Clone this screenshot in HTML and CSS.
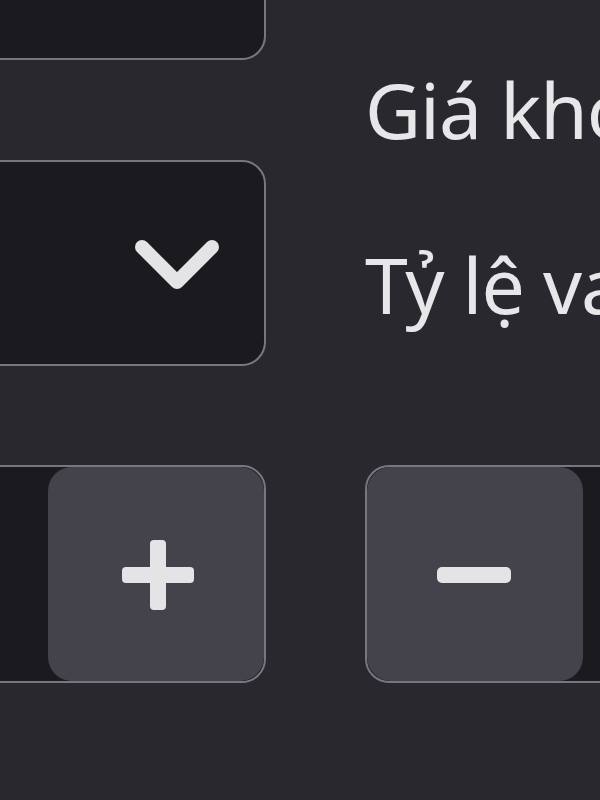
FILE: index.html
```html
<!DOCTYPE html>
<html lang="vi">
<head>
  <meta charset="UTF-8" />
  <meta name="viewport" content="width=device-width, initial-scale=1.0"/>
  <title>Tính khoản vay</title>
  <link rel="stylesheet" href="styles.css">
</head>
<body>
  <div class="page">
    <div class="col-left">
      <div class="field field-top"></div>

      <div class="field select">
        <svg class="chevron" width="84" height="52" viewBox="0 0 84 52">
          <polyline points="7,7 42,42 77,7" fill="none" stroke="#e4e4e6" stroke-width="14" stroke-linecap="round" stroke-linejoin="round"/>
        </svg>
      </div>

      <div class="field stepper stepper-plus">
        <div class="stepper-input"></div>
        <button class="step-btn" aria-label="Tăng">
          <svg width="72" height="70" viewBox="0 0 72 70">
            <rect x="0" y="27" width="72" height="16" rx="4" fill="#e4e4e6"/>
            <rect x="28" y="0" width="16" height="70" rx="4" fill="#e4e4e6"/>
          </svg>
        </button>
      </div>
    </div>

    <div class="col-right">
      <div class="labels">
        <p class="label">Giá khởi điểm</p>
        <p class="label">Tỷ lệ vay</p>
      </div>

      <div class="field stepper stepper-minus">
        <button class="step-btn" aria-label="Giảm">
          <svg width="74" height="16" viewBox="0 0 74 16">
            <rect x="0" y="0" width="74" height="16" rx="5" fill="#e4e4e6"/>
          </svg>
        </button>
        <div class="stepper-input"></div>
      </div>
    </div>
  </div>
</body>
</html>
```

FILE: styles.css
```css
body {
  margin: 0;
  background: #29282e;
  font-family: 'Noto Sans', sans-serif;
  color: #e7e7e9;
  overflow: hidden;
  height: 800px;
}

.page {
  display: grid;
  grid-template-columns: 466px 700px;
  column-gap: 99px;
  margin-left: -200px;
}

.col-left {
  display: flex;
  flex-direction: column;
}

.field {
  background: #1b1a1f;
  border: 2px solid #78777d;
  border-radius: 24px;
  box-sizing: border-box;
}

.field-top {
  height: 180px;
  margin-top: -120px;
}

.select {
  height: 206px;
  margin-top: 100px;
  display: flex;
  align-items: center;
  justify-content: flex-end;
  padding-right: 45px;
  padding-top: 5px;
}

.stepper {
  height: 218px;
  display: flex;
  overflow: hidden;
}

.stepper-plus {
  margin-top: 99px;
}

.stepper-input {
  flex: 1;
}

.step-btn {
  width: 216px;
  border: none;
  padding: 0;
  margin: 0;
  background: #44434b;
  border-radius: 24px;
  display: flex;
  align-items: center;
  justify-content: center;
  cursor: pointer;
}

.stepper-plus .step-btn svg {
  margin-left: 3px;
  margin-top: 2px;
}

.stepper-minus .step-btn svg {
  margin-right: 3px;
  margin-top: 2px;
}

.labels {
  padding-top: 22px;
}

.label {
  margin: 0;
  font-size: 77px;
  letter-spacing: -1px;
  line-height: 175px;
  white-space: nowrap;
}

.stepper-minus {
  margin-top: 93px;
  border-right: none;
  border-radius: 24px 0 0 24px;
}
```
